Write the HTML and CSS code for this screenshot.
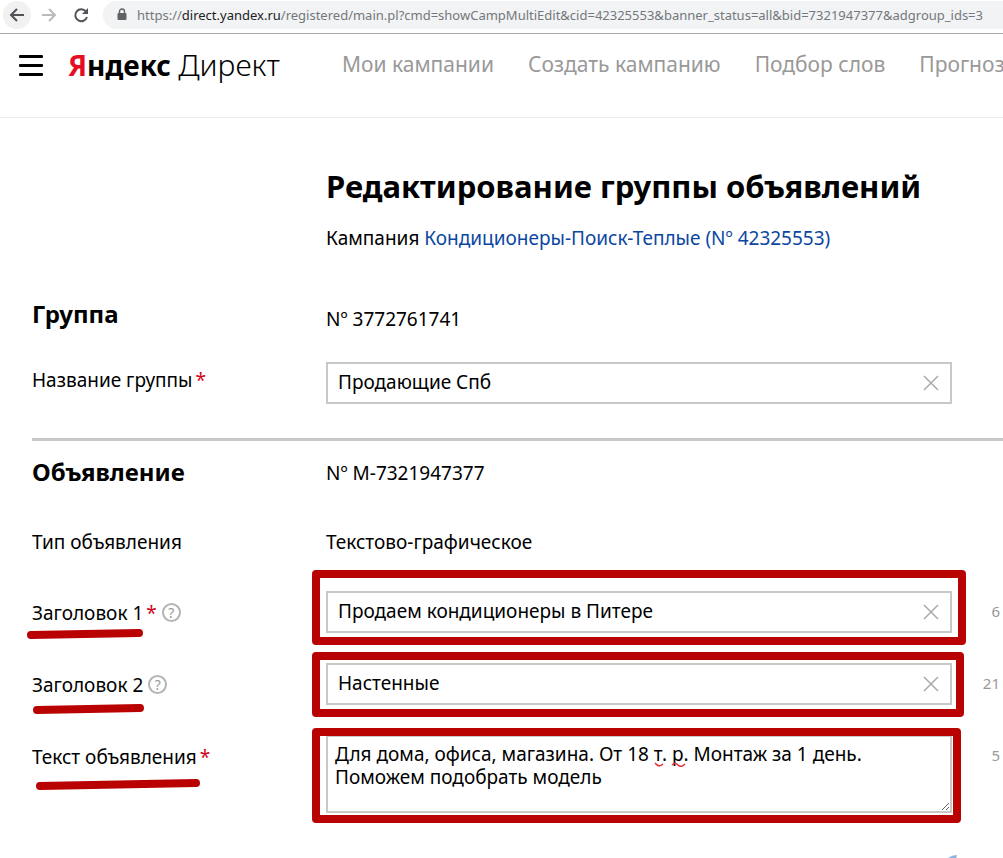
FILE: index.html
```html
<!DOCTYPE html>
<html lang="ru">
<head>
    <meta charset="utf-8">
    <title>Яндекс Директ</title>
    <link rel="stylesheet" href="styles.css">
</head>
<body>
    <div class="browser-bar">
        <button class="nav-button active" aria-label="Назад">
            <svg width="16" height="16" viewBox="0 0 16 16"><path d="M15 8H2M8 2L2 8l6 6" stroke="#505357"/></svg>
        </button>
        <button class="nav-button" aria-label="Вперёд">
            <svg width="16" height="16" viewBox="0 0 16 16"><path d="M1 8h13M8 2l6 6-6 6" stroke="#b9bbbd"/></svg>
        </button>
        <button class="nav-button" aria-label="Обновить">
            <svg width="16" height="16" viewBox="0 0 16 16"><path d="M13 4.500A6 6 0 1 0 14 10" stroke="#505357"/><path d="M15 1v6H9z" fill="#505357"/></svg>
        </button>
        <div class="address">
            <svg class="lock" width="10" height="13" viewBox="0 0 10 13"><rect x="0.500" y="5" width="9" height="7" rx="1" fill="#5f6368"/><path d="M2.500 5V3.500a2.500 2.500 0 0 1 5 0V5" fill="none" stroke="#5f6368" stroke-width="1.400"/></svg>
            <span class="url">https://<b>direct.yandex.ru</b>/registered/main.pl?cmd=showCampMultiEdit&amp;cid=42325553&amp;banner_status=all&amp;bid=7321947377&amp;adgroup_ids=3</span>
        </div>
    </div>

    <header class="header">
        <button class="burger" aria-label="Меню"><i></i><i></i><i></i></button>
        <a class="logo" href="#"><b><span class="logo-ya">Я</span>ндекс</b> <span class="logo-direct">Директ</span></a>
        <nav class="menu">
            <a href="#">Мои кампании</a>
            <a href="#">Создать кампанию</a>
            <a href="#">Подбор слов</a>
            <a href="#">Прогноз</a>
        </nav>
    </header>

    <main class="page">
        <div class="intro">
            <h1>Редактирование группы объявлений</h1>
            <p>Кампания <a href="#">Кондиционеры-Поиск-Теплые (Nº 42325553)</a></p>
        </div>

        <section class="section group">
            <div class="row head">
                <h2>Группа</h2>
                <div class="value">Nº 3772761741</div>
            </div>
            <div class="row">
                <label for="name">Название группы <em>*</em></label>
                <div class="field">
                    <input id="name" type="text" value="Продающие Спб">
                    <button class="clear" aria-label="Очистить"><svg width="16" height="16" viewBox="0 0 16 16"><path d="M1 1l14 14M15 1L1 15"/></svg></button>
                </div>
            </div>
        </section>

        <section class="section banner">
            <div class="row head">
                <h2>Объявление</h2>
                <div class="value">Nº М-7321947377</div>
            </div>
            <div class="row type">
                <div class="label">Тип объявления</div>
                <div class="value">Текстово-графическое</div>
            </div>
            <div class="row">
                <div class="label">
                    <label for="title1">Заголовок 1 <em>*</em></label>
                    <button class="help" aria-label="Помощь">?</button>
                    <svg class="underline first" width="118" height="12" viewBox="0 0 118 12"><path d="M5 7L113 5"/></svg>
                </div>
                <div class="field">
                    <input id="title1" type="text" value="Продаем кондиционеры в Питере">
                    <button class="clear" aria-label="Очистить"><svg width="16" height="16" viewBox="0 0 16 16"><path d="M1 1l14 14M15 1L1 15"/></svg></button>
                    <div class="frame frame-1"></div>
                </div>
                <span class="counter">6</span>
            </div>
            <div class="row">
                <div class="label">
                    <label for="title2">Заголовок 2</label>
                    <button class="help" aria-label="Помощь">?</button>
                    <svg class="underline" width="114" height="12" viewBox="0 0 114 12"><path d="M5 7L108 5"/></svg>
                </div>
                <div class="field">
                    <input id="title2" type="text" value="Настенные">
                    <button class="clear" aria-label="Очистить"><svg width="16" height="16" viewBox="0 0 16 16"><path d="M1 1l14 14M15 1L1 15"/></svg></button>
                    <div class="frame frame-2"></div>
                </div>
                <span class="counter">21</span>
            </div>
            <div class="row">
                <div class="label">
                    <label for="text">Текст объявления <em>*</em></label>
                    <svg class="underline last" width="172" height="14" viewBox="0 0 172 14"><path d="M8 9L164 6"/></svg>
                </div>
                <div class="field">
                    <textarea id="text" spellcheck="false">Для дома, офиса, магазина. От 18 т. р. Монтаж за 1 день.
Поможем подобрать модель</textarea>
                    <svg class="spelling" width="34" height="5" viewBox="0 0 34 5"><path d="M1 1q4 5 8 1M18 3q3-3 6 0t7-1"/></svg>
                    <div class="frame frame-3"></div>
                </div>
                <span class="counter">5</span>
            </div>
        </section>
        <svg class="corner" width="10" height="4" viewBox="0 0 10 4"><path d="M0 3Q4 0 9 0L8 4H1z" fill="#8fb3dc"/></svg>
    </main>
</body>
</html>
```
FILE: styles.css
```css
* {
    box-sizing: border-box;
}

body {
    margin: 0;
    background: #fff;
    color: #000;
    font-family: "Noto Sans", "Open Sans", sans-serif;
    font-size: 19px;
    line-height: 24px;
    overflow-x: hidden;
}

button {
    padding: 0;
    border: none;
    background: none;
    cursor: pointer;
}

a {
    color: inherit;
    text-decoration: none;
}

h1, h2, p {
    margin: 0;
}

/* Browser bar */
.browser-bar {
    display: flex;
    align-items: center;
    gap: 4px;
    height: 34px;
    padding: 0 0 4px 3px;
    border-bottom: 1px solid #a9a9ab;
}

.nav-button {
    display: flex;
    align-items: center;
    justify-content: center;
    flex: none;
    width: 28px;
    height: 28px;
    border-radius: 50%;
}

.nav-button.active {
    background: #f1f1f2;
}

.nav-button path {
    fill: none;
    stroke-width: 2;
}

.nav-button path[fill] {
    fill: #505357;
}

.address {
    display: flex;
    align-items: center;
    gap: 10px;
    flex: 1;
    min-width: 0;
    height: 28px;
    margin-left: 4px;
    padding-left: 14px;
    border-radius: 14px 0 0 14px;
    background: #f1f3f4;
    overflow: hidden;
}

.lock {
    flex: none;
}

.url {
    color: #74787c;
    font-size: 13px;
    white-space: nowrap;
}

.url b {
    color: #202124;
    font-weight: normal;
}

/* Site header */
.header {
    display: flex;
    height: 84px;
    padding: 17px 0 0 19px;
    border-bottom: 1px solid #ececec;
    overflow: hidden;
    white-space: nowrap;
}

.burger {
    display: flex;
    flex-direction: column;
    gap: 6px;
    flex: none;
    width: 24px;
    height: 21px;
    margin-top: 4px;
}

.burger i {
    width: 24px;
    height: 3px;
    border-radius: 1px;
    background: #000;
}

.logo {
    flex: none;
    width: 274px;
    padding-left: 25px;
    font-size: 28px;
    line-height: 28px;
}

.logo-ya {
    color: #e50c24;
}

.logo-direct {
    font-size: 30px;
    font-weight: 300;
}

.menu {
    display: flex;
    gap: 34px;
    padding-left: 25px;
    color: #999;
    font-size: 21px;
    line-height: 26px;
}

/* Form */
.page {
    padding: 48px 3px 0 32px;
}

.intro {
    padding-left: 294px;
}

h1 {
    font-size: 31px;
    line-height: 40px;
    white-space: nowrap;
}

.intro p {
    margin-top: 20px;
}

.intro a {
    color: #0b47a1;
}

.section {
    display: flex;
    flex-direction: column;
    gap: 30px;
}

.group {
    gap: 32px;
    margin: 48px -3px 0 0;
    padding: 0 3px 34px 0;
    border-bottom: 3px solid #c8c8c8;
}

.banner {
    padding-top: 15px;
}

.row {
    display: grid;
    grid-template-columns: 294px minmax(0, 1fr) 48px;
    align-items: start;
}

/* the number sits on the lower edge of the group heading */
.group .head {
    height: 32px;
}

.head .value {
    padding-top: 5px;
}

.group .value {
    padding-top: 9px;
}

.row.type {
    margin: 12px 0 7px;
}

h2 {
    font-size: 24px;
    line-height: 32px;
}

.row > label {
    padding-top: 6px;
}

.row > .label {
    position: relative;
    padding-top: 10px;
}

.row.type > .label {
    padding-top: 0;
}

em {
    margin-left: -2px;
    color: #d0021b;
    font-style: normal;
}

.help {
    width: 19px;
    height: 19px;
    border: 2px solid #b4b4b4;
    border-radius: 50%;
    color: #999;
    font: 14px/15px "Noto Sans", sans-serif;
    vertical-align: 2px;
}

.field {
    position: relative;
}

input,
textarea {
    display: block;
    width: 100%;
    height: 42px;
    padding: 0 40px 2px 10px;
    border: 2px solid #c8c8c8;
    border-radius: 0;
    background: #fff;
    color: #000;
    font: inherit;
    outline: none;
}

textarea {
    height: 78px;
    padding: 6px 7px;
    line-height: 23px;
}

.clear {
    position: absolute;
    top: 13px;
    right: 13px;
    width: 16px;
    height: 16px;
}

.clear svg {
    display: block;
}

.clear path {
    fill: none;
    stroke: #aaa;
    stroke-width: 1.5;
}

.counter {
    padding-top: 8px;
    color: #999;
    font-size: 15px;
    text-align: right;
}

/* Red marks over the form */
.frame {
    position: absolute;
    border: 8px solid #b90202;
    border-radius: 4px;
    pointer-events: none;
}

.frame-1 {
    inset: -21px -14px -12px -14px;
}

.frame-2 {
    inset: -11px -12px -12px -14px;
}

.frame-3 {
    inset: -7px -9px -10px -14px;
}

.underline {
    position: absolute;
    top: 40px;
    left: 0;
}

.underline.first {
    top: 37px;
    left: -6px;
}

.underline.last {
    top: 42px;
}

.underline path {
    fill: none;
    stroke: #b90202;
    stroke-width: 8;
    stroke-linecap: round;
}

.spelling {
    position: absolute;
    top: 27px;
    left: 328px;
}

.spelling path {
    fill: none;
    stroke: #e0303c;
    stroke-width: 1.5;
}

.corner {
    display: block;
    margin: 42px 42px 0 auto;
}
```
